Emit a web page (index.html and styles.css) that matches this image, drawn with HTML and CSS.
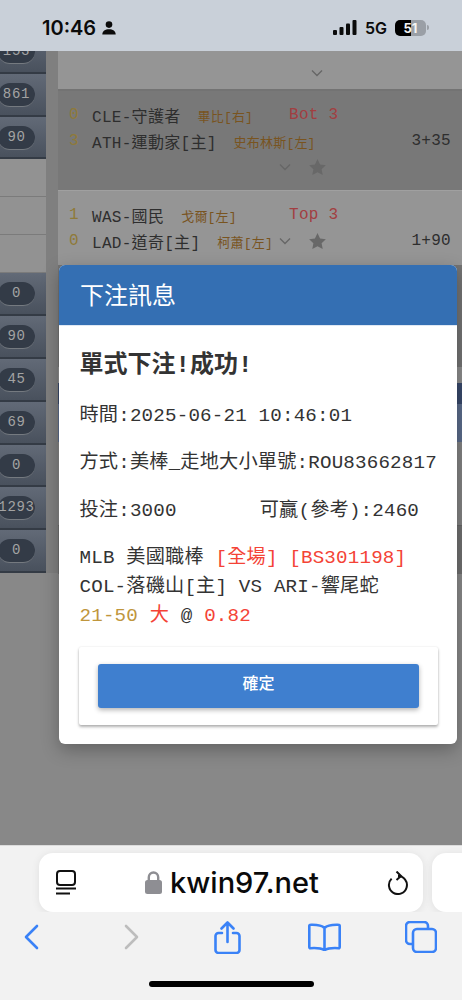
FILE: index.html
```html
<!DOCTYPE html>
<html>
<head>
<meta charset="UTF-8">
<title>下注訊息</title>
<link rel="stylesheet" href="styles.css">
</head>
<body>
<div class="phone">

  <!-- status bar -->
  <div class="status">
    <div class="status-left">
      <span class="clock">10:46</span>
      <svg class="person" width="14" height="14" viewBox="0 0 14 14"><circle cx="7" cy="3.6" r="3.3"/><path d="M0.3 13.6c0-3.6 3-5.3 6.7-5.3s6.7 1.7 6.7 5.3z"/></svg>
    </div>
    <div class="status-right">
      <svg class="signal" width="24" height="15" viewBox="0 0 24 15"><rect x="0" y="10" width="4" height="5" rx="1"/><rect x="6.5" y="7" width="4" height="8" rx="1"/><rect x="13" y="3.5" width="4" height="11.500" rx="1"/><rect x="19.500" y="0" width="4" height="15" rx="1"/></svg>
      <span class="net">5G</span>
      <span class="battery">51</span>
      <span class="battery-cap"></span>
    </div>
  </div>

  <!-- page behind the dialog -->
  <div class="page">
    <div class="side">
      <div class="side-list">
        <div class="league"><span class="pill">153</span></div>
        <div class="league"><span class="pill">861</span></div>
        <div class="league"><span class="pill">90</span></div>
        <div class="cell"></div>
        <div class="cell"></div>
        <div class="cell"></div>
        <div class="league"><span class="pill">0</span></div>
        <div class="league"><span class="pill">90</span></div>
        <div class="league"><span class="pill">45</span></div>
        <div class="league"><span class="pill">69</span></div>
        <div class="league"><span class="pill">0</span></div>
        <div class="league"><span class="pill">1293</span></div>
        <div class="league"><span class="pill">0</span></div>
      </div>
    </div>

    <div class="games">
      <div class="game-top">
        <svg class="chev" width="14" height="8" viewBox="0 0 14 8"><path d="M2 1.500l5 5 5-5"/></svg>
      </div>

      <div class="game game-dark">
        <div class="line">
          <span class="score">0</span>
          <div class="info"><span class="team">CLE-守護者</span><span class="pitcher">畢比[右]</span></div>
          <span class="inning">Bot 3</span>
        </div>
        <div class="line">
          <span class="score">3</span>
          <div class="info"><span class="team">ATH-運動家[主]</span><span class="pitcher">史布林斯[左]</span></div>
          <span class="clock-game">3+35</span>
        </div>
        <div class="line tools-line">
          <svg class="chev" width="14" height="8" viewBox="0 0 14 8"><path d="M2 1.500l5 5 5-5"/></svg>
          <svg class="star" width="17" height="16" viewBox="0 0 24 23"><path d="M12 0l3.700 7.800 8.300 1.100-6.100 5.900 1.600 8.200-7.500-4.100-7.500 4.100 1.600-8.200L0 8.900l8.300-1.100z"/></svg>
        </div>
      </div>

      <div class="game game-light">
        <div class="line">
          <span class="score">1</span>
          <div class="info"><span class="team">WAS-國民</span><span class="pitcher">戈爾[左]</span></div>
          <span class="inning">Top 3</span>
        </div>
        <div class="line">
          <span class="score">0</span>
          <div class="info info-short"><span class="team">LAD-道奇[主]</span><span class="pitcher">柯蕭[左]</span></div>
          <svg class="chev" width="14" height="8" viewBox="0 0 14 8"><path d="M2 1.500l5 5 5-5"/></svg>
          <svg class="star" width="17" height="16" viewBox="0 0 24 23"><path d="M12 0l3.700 7.800 8.300 1.100-6.100 5.900 1.600 8.200-7.500-4.100-7.500 4.100 1.600-8.200L0 8.900l8.300-1.100z"/></svg>
          <span class="clock-game">1+90</span>
        </div>
      </div>

      <div class="band band-hidden"></div>
      <div class="band band-next"></div>
      <div class="band band-navy"></div>
      <div class="band band-steel"></div>
      <div class="band band-mid"></div>
      <div class="band band-low"></div>
    </div>

    <!-- dialog -->
    <div class="dialog">
      <div class="dialog-head">下注訊息</div>
      <div class="dialog-body">
        <h3>單式下注!成功!</h3>
        <p>時間:2025-06-21 10:46:01</p>
        <p>方式:美棒_走地大小單號:ROU83662817</p>
        <p><span>投注:3000</span><span class="win">可贏(參考):2460</span></p>
        <p>MLB 美國職棒 <span class="red">[全場]</span> <span class="red">[BS301198]</span><br>
        COL-落磯山[主] VS ARI-響尾蛇<br>
        <span class="gold">21-50</span> <span class="red">大</span> @ <span class="red">0.82</span></p>
      </div>
      <div class="dialog-foot">
        <button class="btn-ok">確定</button>
      </div>
    </div>
  </div>

  <!-- safari bar -->
  <div class="safari">
    <div class="address-row">
      <div class="address">
        <svg class="reader" width="22" height="25" viewBox="0 0 22 25"><rect x="2" y="1" width="18" height="14" rx="3"/><path d="M1 18.500h20M1 23.500h14"/></svg>
        <div class="host">
          <svg class="lock" width="17" height="23" viewBox="0 0 17 23"><path class="lock-arc" d="M3.800 10V6.200a4.700 4.700 0 0 1 9.400 0V10"/><rect x="0" y="9" width="17" height="14" rx="2.500"/></svg>
          <span>kwin97.net</span>
        </div>
        <svg class="reload" width="22" height="24" viewBox="0 0 22 24"><path d="M14 5H11a9 9 0 1 1-6.400 2.600"/><path d="M9.500 .5l4.500 4.500-4.500 4"/></svg>
      </div>
      <div class="address-next"></div>
    </div>
    <div class="toolbar">
      <svg class="tool" width="16" height="26" viewBox="0 0 16 26"><path d="M14 2L3 13l11 11"/></svg>
      <svg class="tool tool-off" width="16" height="26" viewBox="0 0 16 26"><path d="M2 2l11 11L2 24"/></svg>
      <svg class="tool" width="27" height="33" viewBox="0 0 27 33"><path d="M8 12H4.500A3 3 0 0 0 1.500 15v14a3 3 0 0 0 3 3h18a3 3 0 0 0 3-3V15a3 3 0 0 0-3-3H19"/><path d="M13.500 21V2M7.500 7.500l6-6 6 6"/></svg>
      <svg class="tool" width="33" height="28" viewBox="0 0 33 28"><path d="M16.500 5C14 2.500 10 1.500 2.500 1.800c-.7 0-1.200.6-1.200 1.300v21c0 .7.500 1.200 1.200 1.100 6-.4 11 .1 14 2 3-1.900 8-2.400 14-2 .7.100 1.200-.4 1.200-1.100v-21c0-.7-.5-1.300-1.200-1.300C23 1.500 19 2.500 16.500 5zM16.500 5v22"/></svg>
      <svg class="tool" width="32" height="32" viewBox="0 0 32 32"><path d="M7 23H5a4 4 0 0 1-4-4V5a4 4 0 0 1 4-4h14a4 4 0 0 1 4 4v2"/><rect x="8" y="8" width="23" height="23" rx="4"/></svg>
    </div>
    <div class="home-bar"></div>
  </div>
</div>
</body>
</html>
```

FILE: styles.css
```css
*{ margin:0; padding:0; box-sizing:border-box; }
body{ background:#f2f2f2; font-family:"Liberation Mono","Noto Sans CJK TC",monospace; }
.phone{ width:462px; height:1000px; display:flex; flex-direction:column; overflow:hidden; }

/* status bar */
.status{ height:51px; flex:none; background:#c9d0d9; display:flex; justify-content:space-between; align-items:center; padding:4px 33px 0 42px; font-family:Inter,"Liberation Sans",sans-serif; color:#0b0b0b; }
.status-left{ display:flex; align-items:center; gap:6px; }
.clock{ font-size:20px; font-weight:600; }
.person{ fill:#0b0b0b; }
.status-right{ display:flex; align-items:center; }
.signal{ fill:#0b0b0b; margin-right:8px; }
.net{ font-size:16px; font-weight:600; margin-right:8px; }
.battery{ width:31px; height:16px; border-radius:5px; background:linear-gradient(90deg,#000 0,#000 53%,#9a9fa6 53%,#9a9fa6 100%); color:#f4f4f4; font-size:13px; font-weight:700; line-height:16px; text-align:center; }
.battery-cap{ width:2px; height:5px; margin-left:1px; background:#9a9fa6; border-radius:0 2px 2px 0; }

/* page behind dialog */
.page{ height:794px; flex:none; position:relative; display:flex; background:#888; overflow:hidden; }
.side{ width:58px; flex:none; overflow:hidden; }
.side-list{ width:58px; margin-top:-20px; border-right:12px solid #7f7f7f; overflow:hidden; }
.league{ height:42.8px; padding-top:9px; background:linear-gradient(180deg,#626a77,#49515d); border-bottom:2px solid #343b45; }
.pill{ display:block; width:37px; height:24px; margin-left:-2px; border-radius:12px; background:#333b47; border-bottom:1px solid #757a80; color:#a3a3a3; font-size:14px; line-height:23px; letter-spacing:.7px; text-align:center; white-space:nowrap; }
.cell{ height:38px; background:#929292; border-bottom:1px solid #7b7b7b; }

.games{ flex:1; min-width:0; }
.game-top{ height:40px; background:#959595; border-bottom:2px solid #737373; padding:13px 0 0 252px; }
.game{ padding:0 11px; color:#2e2e2e; font-size:16px; letter-spacing:.3px; }
.game-dark{ height:100px; padding-top:11px; background:#787878; border-bottom:1px solid #a0a0a0; }
.game-light{ height:74px; padding-top:11px; background:#959595; }
.line{ display:flex; align-items:center; height:26px; }
.tools-line{ padding-left:209px; }
.score{ width:23px; color:#8f7a38; }
.info{ width:197px; display:flex; align-items:center; white-space:nowrap; }
.info-short{ width:186px; }
.team{ color:#2e2e2e; }
.pitcher{ margin-left:17px; color:#79541f; font-size:13px; letter-spacing:.2px; }
.inning{ color:#a23e41; }
.clock-game{ margin-left:auto; color:#2e2e2e; }
.chev{ fill:none; stroke:#666; stroke-width:1.300; flex:none; }
.star{ fill:#686868; flex:none; margin-left:17px; }

.band-hidden{ height:102px; background:#737373; }
.band-next{ height:16px; background:#8c8c8c; }
.band-navy{ height:21px; background:#38486a; }
.band-steel{ height:38px; background:#5a6b8a; }
.band-mid{ height:84px; background:#828282; border-bottom:1px solid #666; }
.band-low{ height:48px; background:#6f6f6f; }

/* dialog */
.dialog{ position:absolute; left:59px; top:214px; width:398px; height:479px; background:#fff; border-radius:6px; box-shadow:0 6px 18px rgba(0,0,0,.28); color:#333; font-size:19.2px; line-height:28.8px; letter-spacing:.18px; }
.dialog-head{ height:61px; padding:6px 0 0 21px; background:#346fb3; border-bottom:1px solid #dfe8f3; border-radius:6px 6px 0 0; color:#fff; font-size:24px; line-height:54px; letter-spacing:0; }
.dialog-body{ padding:22px 20px 0 20.500px; }
.dialog-body h3{ font-size:24px; font-weight:700; line-height:36px; margin-bottom:18px; color:#333; letter-spacing:0; }
.dialog-body p{ margin-bottom:18.600px; white-space:nowrap; }
.dialog-body p:last-child{ margin-bottom:16.800px; }
.win{ margin-left:83px; }
.red{ color:#f44336; }
.gold{ color:#c0963c; }
.dialog-foot{ margin:0 19px 0 20px; height:78px; padding:17px 19px; background:#fff; border-radius:2px; box-shadow:0 2px 3px rgba(0,0,0,.3),0 0 2px rgba(0,0,0,.1); }
.btn-ok{ display:block; width:100%; height:44px; padding-bottom:8px; border:0; border-radius:3px; background:#3f7fcf; color:#fff; font-family:"Noto Sans CJK TC",sans-serif; font-size:16px; font-weight:500; box-shadow:0 2px 5px rgba(0,0,0,.3); }

/* safari bar */
.safari{ height:155px; flex:none; background:#f2f2f2; border-top:1px solid #dcdcdc; }
.address-row{ display:flex; gap:9px; padding:7px 0 0 39px; overflow:hidden; }
.address{ width:384px; height:59px; flex:none; background:#fff; border-radius:14px; box-shadow:0 1px 8px rgba(0,0,0,.08); display:flex; align-items:center; justify-content:space-between; padding:0 14px 0 16px; }
.address-next{ width:60px; height:59px; flex:none; background:#fff; border-radius:14px 0 0 14px; box-shadow:0 1px 8px rgba(0,0,0,.08); }
.reader{ fill:none; stroke:#111; stroke-width:2; flex:none; }
.host{ display:flex; align-items:center; gap:8px; color:#0a0a0a; font-family:Inter,"Liberation Sans",sans-serif; font-size:29px; font-weight:500; }
.lock{ fill:#8e8e93; flex:none; }
.lock-arc{ fill:none; stroke:#8e8e93; stroke-width:2.400; }
.reload{ fill:none; stroke:#111; stroke-width:2; flex:none; }
.toolbar{ display:grid; grid-template-columns:101px 90px 94px 97px 32px; align-items:center; height:36px; margin-top:7px; padding-left:23px; }
.tool{ fill:none; stroke:#3a82f7; stroke-width:2.600; stroke-linecap:round; stroke-linejoin:round; }
.tool-off{ stroke:#bdbdbd; }
.home-bar{ width:165px; height:6px; margin:26px 0 0 149px; background:#000; border-radius:3px; }
```
